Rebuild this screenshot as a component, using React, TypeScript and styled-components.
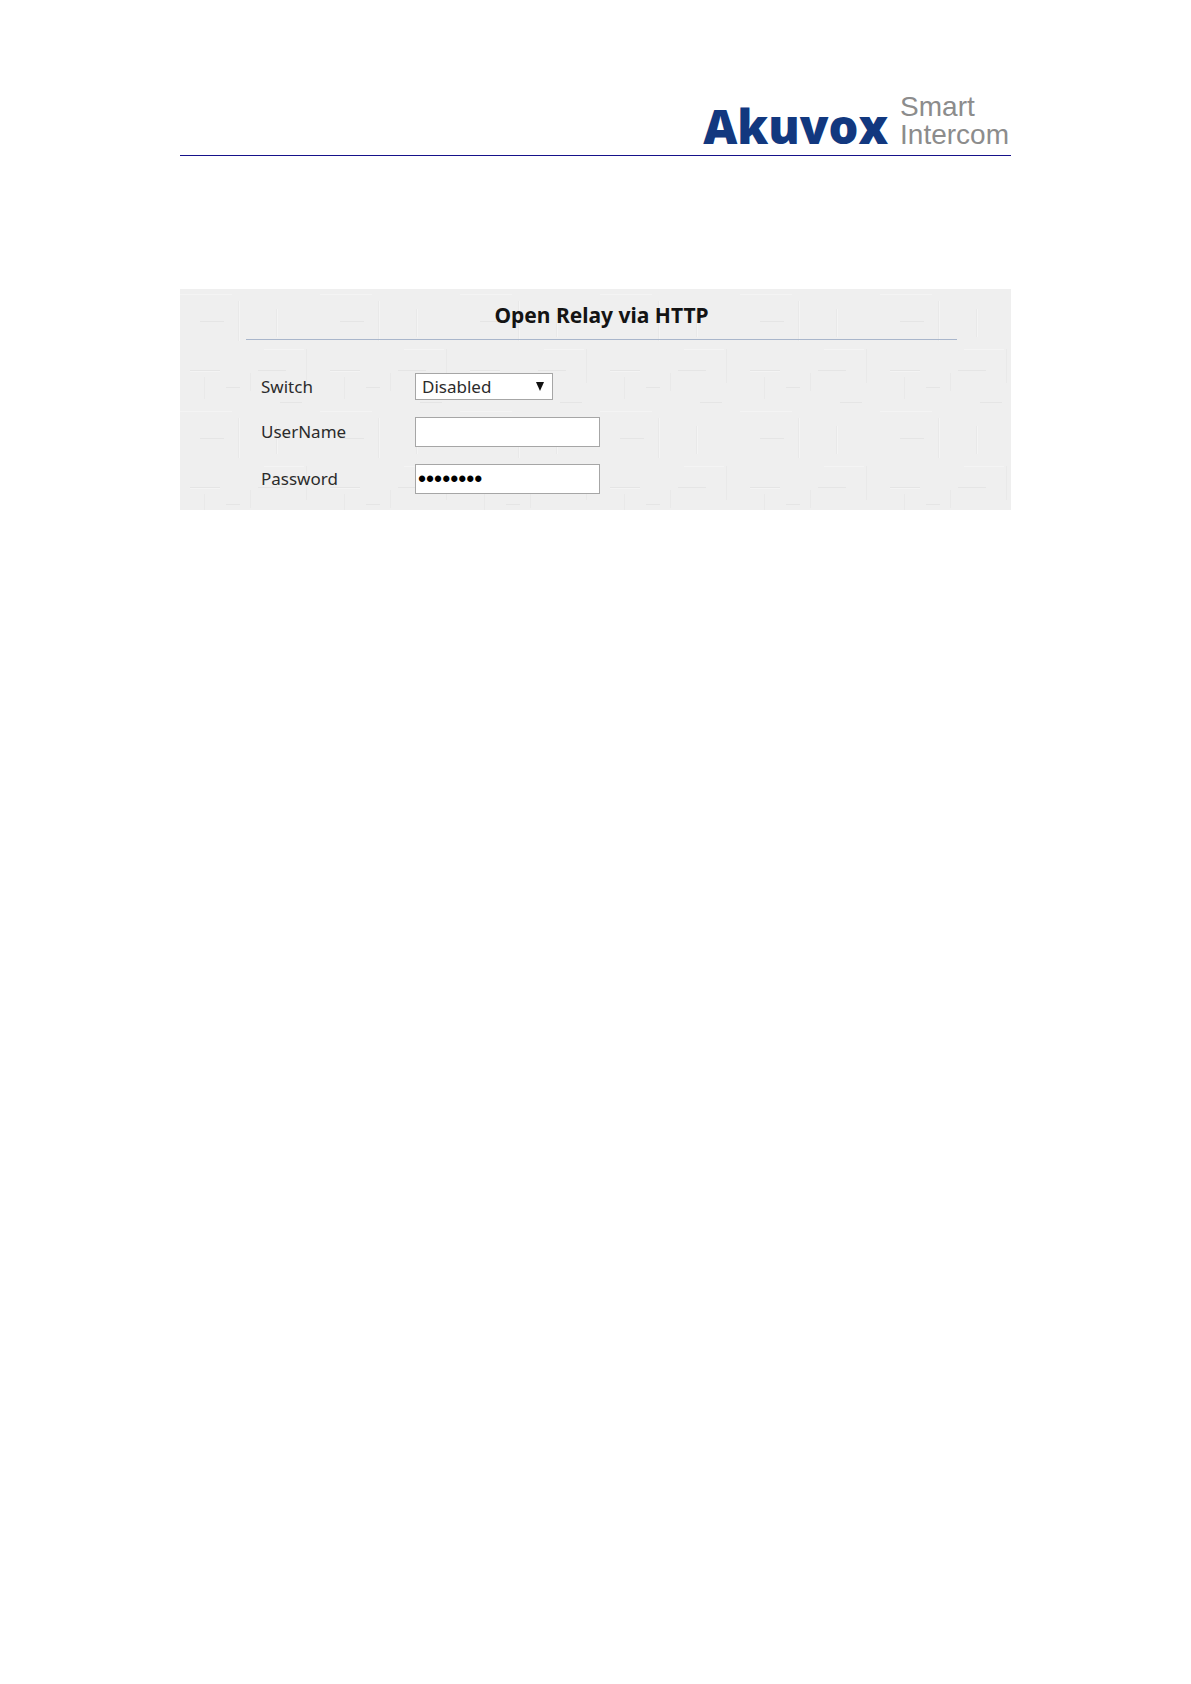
import React, { useState } from "react";
import styled, { createGlobalStyle } from "styled-components";

const GlobalStyle = createGlobalStyle`
  body {
    margin: 0;
    background: #ffffff;
    color: #2b2b2b;
    font-family: "Noto Sans", "Open Sans", sans-serif;
  }
  *, *::before, *::after { box-sizing: border-box; }
`;

const Page = styled.div`
  max-width: 831px;
  margin: 0 auto;
  padding: 93px 0;
`;

const Header = styled.header`
  display: flex;
  justify-content: flex-end;
  align-items: flex-end;
  gap: 12px;
  padding: 0 2px 6px;
  border-bottom: 1px solid #16128a;
`;

const Brand = styled.span`
  color: #12387f;
  font-family: "Open Sans", sans-serif;
  font-size: 47px;
  font-weight: 800;
  line-height: 46px;
`;

const Tagline = styled.span`
  display: flex;
  flex-direction: column;
  color: #8c8c8c;
  font-family: "Liberation Sans", sans-serif;
  font-size: 28px;
  line-height: 28px;
`;

/* Faint woven-paper strokes, tiled over the panel. */
const weave = encodeURIComponent(
  `<svg xmlns="http://www.w3.org/2000/svg" width="140" height="117" fill="none">
    <path stroke="#e5e5e5" d="M10 81.500h30M78 81.500h28M46 98.500h14M100 113.500h22M20 32.500h24"/>
    <path stroke="#e9e9e9" d="M58.500 12v40M96.500 20v28M24.500 88v22M126.500 60v34M70.500 84v18"/>
    <path stroke="#f4f4f4" d="M0 5.500h52M59.500 12v40M84 60.500h40M97.500 20v28M10 82.500h30"/>
  </svg>`
);

const Panel = styled.main`
  margin-top: 133px;
  padding: 0 54px 16px 66px;
  background: #efefef url("data:image/svg+xml,${weave}");
`;

const Title = styled.h1`
  margin: 0;
  padding: 13px 0 11px;
  border-bottom: 1px solid #a9b6cb;
  color: #141414;
  font-size: 21px;
  font-weight: 700;
  line-height: 26px;
  text-align: center;
`;

const Form = styled.form`
  display: grid;
  gap: 17px;
  padding: 33px 15px 0;
`;

const Row = styled.div`
  display: grid;
  grid-template-columns: 154px 1fr;
  align-items: center;
`;

const Label = styled.label`
  font-size: 17px;
  line-height: 26px;
`;

const SelectBox = styled.div`
  position: relative;
  width: 138px;
`;

const Select = styled.select`
  display: block;
  width: 100%;
  height: 27px;
  padding: 0 24px 0 6px;
  appearance: none;
  border: 1px solid #a6a6a6;
  border-radius: 0;
  background: #ffffff;
  color: #2b2b2b;
  font: inherit;
  font-size: 17px;
  line-height: 24px;
`;

const Arrow = styled.svg`
  position: absolute;
  top: 9px;
  right: 9px;
  width: 8px;
  height: 9px;
  pointer-events: none;
`;

const Field = styled.input`
  width: 185px;
  height: 30px;
  padding: 0 2px;
  border: 1px solid #a6a6a6;
  border-radius: 0;
  background: #ffffff;
  color: #000000;
  font-family: "Liberation Sans", sans-serif;
  font-size: ${(p) => (p.type === "password" ? 23 : 17)}px;
`;

export default function App() {
  const [mode, setMode] = useState("Disabled");
  const [user, setUser] = useState("");
  const [password, setPassword] = useState("password");

  return (
    <>
      <GlobalStyle />
      <Page>
        <Header>
          <Brand>Akuvox</Brand>
          <Tagline>
            <span>Smart</span>
            <span>Intercom</span>
          </Tagline>
        </Header>
        <Panel>
          <Title>Open Relay via HTTP</Title>
          <Form>
            <Row>
              <Label htmlFor="switch">Switch</Label>
              <SelectBox>
                <Select id="switch" value={mode} onChange={(e) => setMode(e.target.value)}>
                  <option>Disabled</option>
                  <option>Enabled</option>
                </Select>
                <Arrow viewBox="0 0 8 9" aria-hidden="true">
                  <path d="M0 0h8L4 9z" fill="#111111" />
                </Arrow>
              </SelectBox>
            </Row>
            <Row>
              <Label htmlFor="username">UserName</Label>
              <Field id="username" type="text" value={user} onChange={(e) => setUser(e.target.value)} />
            </Row>
            <Row>
              <Label htmlFor="password">Password</Label>
              <Field
                id="password"
                type="password"
                autoComplete="off"
                value={password}
                onChange={(e) => setPassword(e.target.value)}
              />
            </Row>
          </Form>
        </Panel>
      </Page>
    </>
  );
}
